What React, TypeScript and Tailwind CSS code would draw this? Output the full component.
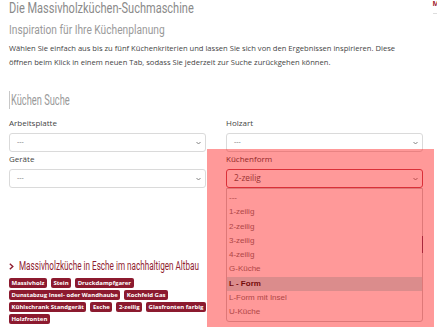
const TAG_ROWS = [
  ["Massivholz", "Stein", "Druckdampfgarer"],
  ["Dunstabzug Insel- oder Wandhaube", "Kochfeld Gas"],
  ["Kühlschrank Standgerät", "Esche", "2-zeilig", "Glasfronten farbig"],
  ["Holzfronten"],
];

const OPTIONS = [
  "---",
  "1-zeilig",
  "2-zeilig",
  "3-zeilig",
  "4-zeilig",
  "G-Küche",
  "L - Form",
  "L-Form mit Insel",
  "U-Küche",
];

function Chevron() {
  return (
    <svg width="5" height="4" viewBox="0 0 5 4" fill="none">
      <path d="M0.5 1 L2.5 3 L4.5 1" stroke="#777" strokeWidth="0.9" />
    </svg>
  );
}

function Select({ value, focused }: { value: string; focused?: boolean }) {
  return (
    <div
      className={
        "flex h-[19px] items-center justify-between rounded-[3px] border bg-white pl-[7px] pr-[4px] " +
        (focused ? "border-[#c2505e]" : "border-[#dadada]")
      }
    >
      <span className={focused ? "text-[8.3px] text-[#555]" : "text-[7px] text-[#777]"}>{value}</span>
      <Chevron />
    </div>
  );
}

function Field({ label, value, focused }: { label: string; value: string; focused?: boolean }) {
  return (
    <div className="flex flex-col">
      <label className="mb-[4px] text-[8px] leading-[12px] text-[#444]">{label}</label>
      <Select value={value} focused={focused} />
    </div>
  );
}

export default function App() {
  return (
    <div className="relative h-[327px] w-[437px] overflow-hidden bg-white font-['Open_Sans',sans-serif] text-[#444]">
      <div className="pl-[9px]">
        <h1 className="h-[16px] whitespace-nowrap font-['Roboto',sans-serif] text-[15px] leading-[16px] text-[#8a8a8a]">
          <span className="inline-block origin-left scale-x-[0.735]">Die Massivholzküchen-Suchmaschine</span>
        </h1>
        <h2 className="mt-[7px] h-[14px] whitespace-nowrap font-['Roboto',sans-serif] text-[12px] leading-[14px] text-[#9a9a9a]">
          <span className="inline-block origin-left scale-x-[0.85]">Inspiration für Ihre Küchenplanung</span>
        </h2>
        <p className="mt-[4px] text-[7.6px] leading-[14px] text-[#444]">
          Wählen Sie einfach aus bis zu fünf Küchenkriterien und lassen Sie sich von den Ergebnissen inspirieren. Diese
          <br />
          öffnen beim Klick in einem neuen Tab, sodass Sie jederzeit zur Suche zurückgehen können.
        </p>

        <h3 className="mt-[22px] h-[18px] whitespace-nowrap border-l border-[#c8c8c8] pl-[1px] font-['Roboto',sans-serif] text-[15px] leading-[18px] text-[#9a9a9a]">
          <span className="inline-block origin-left scale-x-[0.62]">Küchen Suche</span>
        </h3>

        <div className="mt-[8px] grid w-[414px] grid-cols-2 gap-x-[20px] gap-y-[1px]">
          <Field label="Arbeitsplatte" value="---" />
          <Field label="Holzart" value="---" />
          <Field label="Geräte" value="---" />
          <Field label="Küchenform" value="2-zeilig" focused />
        </div>

        <h4 className="mt-[71px] flex h-[14px] items-center gap-[5px] whitespace-nowrap font-['Roboto',sans-serif] text-[12.5px] leading-[14px] text-[#8f1c30]">
          <svg width="5" height="7" viewBox="0 0 5 7" fill="none">
            <path d="M0.8 0.8 L3.8 3.5 L0.8 6.2" stroke="#8f1c30" strokeWidth="1.4" />
          </svg>
          <span className="inline-block origin-left scale-x-[0.65]">Massivholzküche in Esche im nachhaltigen Altbau</span>
        </h4>

        <div className="mt-[5px] flex flex-col gap-[2px]">
          {TAG_ROWS.map((row, i) => (
            <div key={i} className="flex gap-[4px]">
              {row.map((tag) => (
                <span
                  key={tag}
                  className="h-[10px] whitespace-nowrap rounded-[2px] bg-[#8c1a2f] px-[2.5px] text-[6px] font-bold leading-[10px] text-white"
                >
                  {tag}
                </span>
              ))}
            </div>
          ))}
        </div>
      </div>

      <span className="absolute right-[-2px] top-[0px] text-[7px] font-bold leading-[8px] text-[#a01c32]">M</span>
      <span className="absolute right-0 top-[13px] h-[1px] w-[4px] bg-[#ddd]" />

      {/* open select list */}
      <div className="absolute left-[226px] top-[188px] h-[134px] w-[197px] rounded-b-[3px] border border-[#c8c8c8] bg-white pt-[2px] font-['Liberation_Sans',Arial,sans-serif]">
        {OPTIONS.map((opt) => (
          <div
            key={opt}
            className={
              "h-[14.3px] pl-[2px] text-[8px] leading-[14.3px] " +
              (opt === "L - Form" ? "bg-[#c4eaea] font-bold text-[#111]" : "text-[#777]")
            }
          >
            {opt}
          </div>
        ))}
      </div>

      {/* highlight overlay */}
      <div className="absolute left-[207px] top-[149px] h-[178px] w-[227px] bg-[rgba(255,0,0,0.4)]" />
      <span className="absolute left-[422px] top-[236px] h-[17px] w-[1px] bg-[#a8283c]" />
    </div>
  );
}
